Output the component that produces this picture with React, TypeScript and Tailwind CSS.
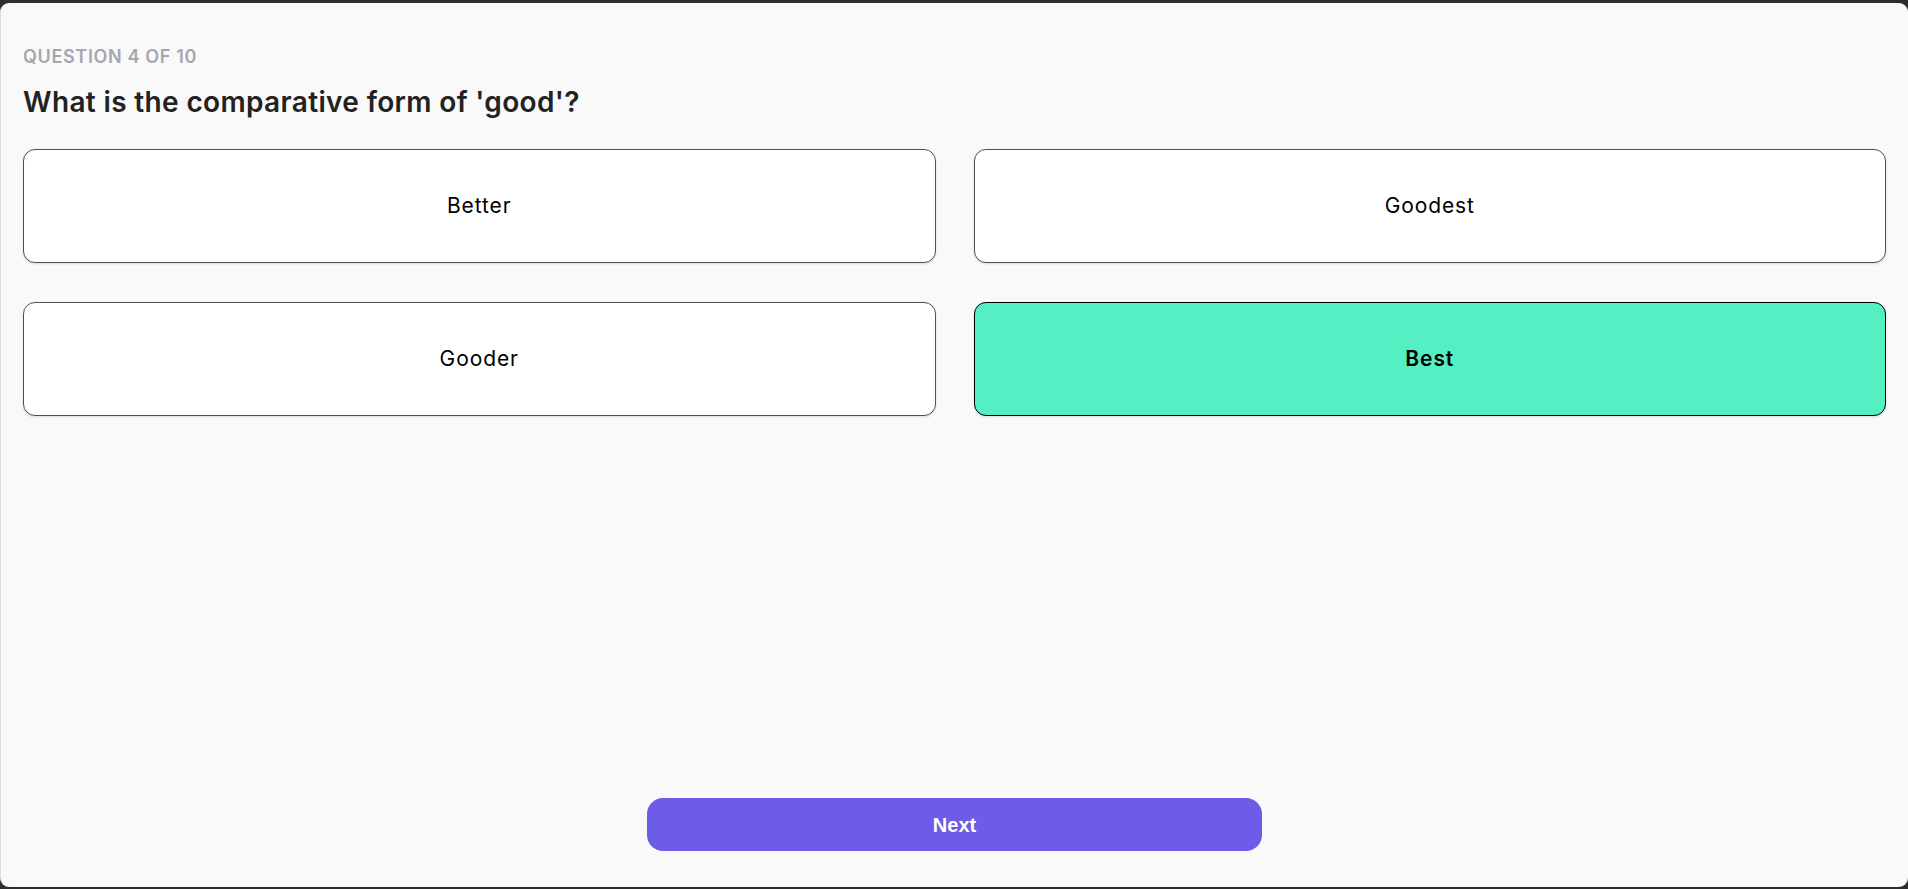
import { useState } from "react";

const options = ["Better", "Goodest", "Gooder", "Best"];

function App() {
  const [picked, setPicked] = useState("Best");

  return (
    <div className="h-screen bg-[#2e2e2e] pt-[3px] pb-[2px]">
      <div className="h-full flex flex-col rounded-[9px] border-l border-[#dcdcdc] bg-[#f9f9f9] px-[22px] pt-[42px] pb-[36px] font-['Inter',sans-serif]">
        <p className="text-[18px] leading-[24px] font-semibold tracking-[0.65px] text-[#a6a6b0]">
          QUESTION 4 OF 10
        </p>
        <h1 className="mt-[15px] text-[28px] leading-[36px] font-semibold tracking-[0.35px] text-[#222222]">
          What is the comparative form of 'good'?
        </h1>

        <div className="mt-[29px] grid grid-cols-2 gap-x-[38px] gap-y-[39px]">
          {options.map((opt) => (
            <button
              key={opt}
              onClick={() => setPicked(opt)}
              className={
                picked === opt
                  ? "h-[114px] rounded-xl border border-black bg-[#55efc4] text-[21px] font-semibold tracking-[0.9px] text-black shadow-sm"
                  : "h-[114px] rounded-xl border border-[#505050] bg-white text-[21px] font-normal tracking-[0.9px] text-black shadow-sm"
              }
            >
              {opt}
            </button>
          ))}
        </div>

        <button className="mt-auto mx-auto h-[53px] w-[615px] rounded-2xl bg-[#6c5ce7] font-['Liberation_Sans',sans-serif] text-[20px] font-bold text-white">
          Next
        </button>
      </div>
    </div>
  );
}

export default App;
